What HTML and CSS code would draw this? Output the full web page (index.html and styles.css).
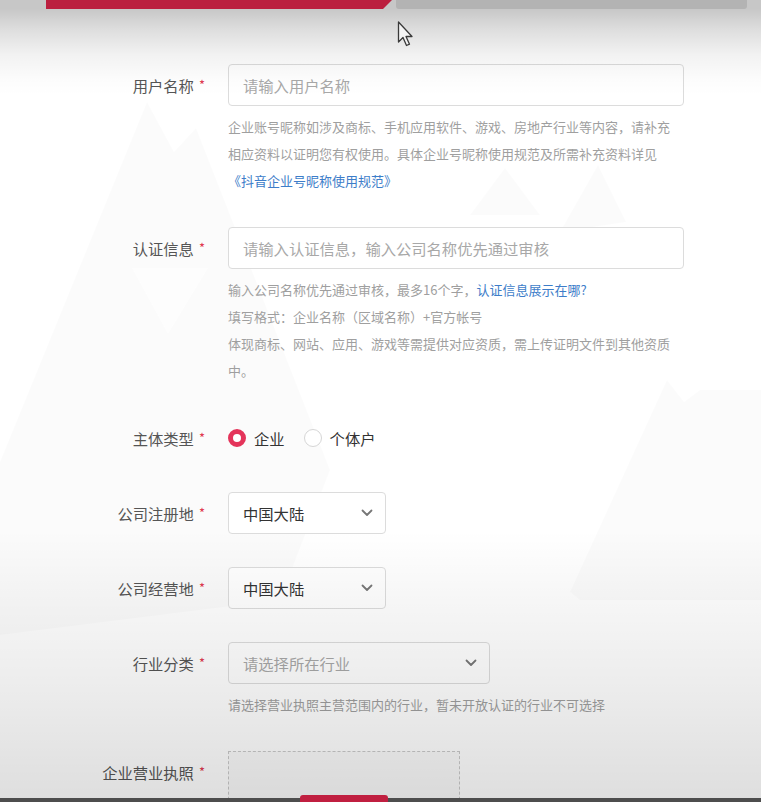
FILE: index.html
```html
<!DOCTYPE html>
<html lang="zh-CN">
<head>
<meta charset="utf-8">
<title>企业认证</title>
<link rel="stylesheet" href="styles.css">
</head>
<body>
<svg class="mountains" width="761" height="802" viewBox="0 0 761 802" aria-hidden="true">
  <polygon points="-40,560 147,102 174,152 196,128 330,470 280,600 -40,640" />
  <polygon points="570,592 667,380 684,402 700,390 761,390 761,600 580,600" />
  <polygon points="560,232 598,165 626,222" />
  <polygon points="470,215 505,168 540,215" />
  <polygon class="snow" points="132,268 168,334 208,268" />
</svg>

<div class="topbar">
  <div class="topbar-red"></div>
  <div class="topbar-grey"></div>
</div>

<main class="form">
  <div class="row">
    <div class="label">用户名称<span class="req">*</span></div>
    <div class="control">
      <div class="input wide"><span class="ph">请输入用户名称</span></div>
      <p class="help">企业账号昵称如涉及商标、手机应用软件、游戏、房地产行业等内容，请补充相应资料以证明您有权使用。具体企业号昵称使用规范及所需补充资料详见<a class="link">《抖音企业号昵称使用规范》</a></p>
    </div>
  </div>

  <div class="row">
    <div class="label">认证信息<span class="req">*</span></div>
    <div class="control">
      <div class="input wide"><span class="ph">请输入认证信息，输入公司名称优先通过审核</span></div>
      <p class="help">输入公司名称优先通过审核，最多16个字，<a class="link">认证信息展示在哪?</a><br>填写格式：企业名称（区域名称）+官方帐号<br>体现商标、网站、应用、游戏等需提供对应资质，需上传证明文件到其他资质中。</p>
    </div>
  </div>

  <div class="row">
    <div class="label">主体类型<span class="req">*</span></div>
    <div class="control radios">
      <span class="radio on"></span><span class="radio-text">企业</span>
      <span class="radio"></span><span class="radio-text">个体户</span>
    </div>
  </div>

  <div class="row">
    <div class="label">公司注册地<span class="req">*</span></div>
    <div class="control">
      <div class="input select small"><span class="val">中国大陆</span><svg class="chev" width="12" height="8" viewBox="0 0 12 8"><path d="M1.5 1.5 L6 6 L10.5 1.5" /></svg></div>
    </div>
  </div>

  <div class="row">
    <div class="label">公司经营地<span class="req">*</span></div>
    <div class="control">
      <div class="input select small"><span class="val">中国大陆</span><svg class="chev" width="12" height="8" viewBox="0 0 12 8"><path d="M1.5 1.5 L6 6 L10.5 1.5" /></svg></div>
    </div>
  </div>

  <div class="row">
    <div class="label">行业分类<span class="req">*</span></div>
    <div class="control">
      <div class="input select medium"><span class="ph">请选择所在行业</span><svg class="chev" width="12" height="8" viewBox="0 0 12 8"><path d="M1.5 1.5 L6 6 L10.5 1.5" /></svg></div>
      <p class="help">请选择营业执照主营范围内的行业，暂未开放认证的行业不可选择</p>
    </div>
  </div>

  <div class="row">
    <div class="label">企业营业执照<span class="req">*</span></div>
    <div class="control">
      <div class="upload"></div>
    </div>
  </div>
</main>

<div class="shade"></div>

<svg class="cursor" width="18" height="28" viewBox="0 0 18 28" aria-hidden="true">
  <path d="M1.5 1 L1.5 21 L6 16.5 L9.5 24.5 L12.5 23.2 L9 15.5 L15 15.5 Z" />
</svg>

<div class="bottombar"><div class="bottom-red"></div></div>
</body>
</html>
```

FILE: styles.css
```css
* { box-sizing: border-box; }

html, body {
  margin: 0;
  padding: 0;
}

body {
  position: relative;
  width: 761px;
  min-height: 802px;
  overflow: hidden;
  background: #ffffff;
  font-family: "Noto Sans CJK SC", "Noto Sans", "Liberation Sans", sans-serif;
  color: #555;
}

.mountains {
  position: absolute;
  left: 0;
  top: 0;
  z-index: 0;
}
.mountains polygon { fill: rgba(0, 0, 0, 0.016); }
.mountains .snow { fill: rgba(255, 255, 255, 0.6); }

.topbar {
  position: relative;
  z-index: 3;
  display: flex;
  height: 9px;
  padding-left: 46px;
  gap: 4px;
}
.topbar-red {
  width: 346px;
  height: 9px;
  background: #bb1f3f;
  clip-path: polygon(0 0, 100% 0, calc(100% - 9px) 100%, 0 100%);
}
.topbar-grey {
  width: 351px;
  height: 9px;
  background: #b3b3b3;
  border-radius: 0 0 3px 3px;
}

.form {
  position: relative;
  z-index: 1;
  padding-top: 55px;
}

.row {
  display: grid;
  grid-template-columns: 205px 1fr;
  column-gap: 23px;
  margin-bottom: 33px;
}

.label {
  height: 42px;
  text-align: right;
  font-size: 15.3px;
  line-height: 42px;
  color: #555;
  white-space: nowrap;
}
.req {
  color: #e0384f;
  font-size: 13px;
  line-height: 1;
  margin-left: 5px;
  position: relative;
  top: -2px;
}

.control { min-width: 0; }

.input {
  display: flex;
  align-items: center;
  height: 42px;
  padding: 0 14px;
  background: #ffffff;
  border: 1px solid #dcdcdc;
  border-radius: 4px;
  font-size: 15.3px;
}
.wide { width: 456px; }
.small { width: 158px; }
.medium { width: 262px; }

.ph { color: #a8a8a8; }
.val { color: #333; }

.select { justify-content: space-between; padding-right: 12px; }
.chev path {
  fill: none;
  stroke: #777;
  stroke-width: 1.8;
  stroke-linecap: round;
  stroke-linejoin: round;
}

.help {
  margin: 7px 0 0;
  width: 450px;
  font-size: 13px;
  line-height: 27px;
  color: #9f9f9f;
}
.link { color: #3d7dc9; text-decoration: none; }

.radios {
  display: flex;
  align-items: center;
  height: 42px;
}
.radio {
  width: 18px;
  height: 18px;
  border-radius: 50%;
  border: 1px solid #d6d6d6;
  background: #fff;
  margin-right: 8px;
}
.radio.on {
  border: 5.5px solid #e4345a;
  background: #fff;
}
.radio-text {
  font-size: 15.3px;
  color: #333;
  margin-right: 19px;
}

.upload {
  width: 232px;
  height: 120px;
  border: 1px dashed #c9c9c9;
  background: #fafafa;
}

.shade {
  position: absolute;
  left: 0;
  top: 0;
  width: 761px;
  height: 802px;
  z-index: 2;
  pointer-events: none;
  background:
    linear-gradient(to bottom, rgba(0,0,0,0.22) 9px, rgba(0,0,0,0.13) 30px, rgba(0,0,0,0.05) 55px, rgba(0,0,0,0.01) 80px, rgba(0,0,0,0) 95px),
    linear-gradient(to bottom, rgba(0,0,0,0) 530px, rgba(0,0,0,0.035) 600px, rgba(0,0,0,0.07) 680px, rgba(0,0,0,0.11) 760px, rgba(0,0,0,0.13) 800px);
}

.cursor {
  position: absolute;
  left: 397px;
  top: 21px;
  z-index: 4;
}
.cursor path {
  fill: #f4f4f4;
  stroke: #3a3a3a;
  stroke-width: 1.3;
  stroke-linejoin: round;
}

.bottombar {
  position: fixed;
  left: 0;
  bottom: 0;
  width: 761px;
  height: 4px;
  z-index: 4;
  background: #4d4d4d;
}
.bottom-red {
  position: absolute;
  left: 300px;
  bottom: 0;
  width: 88px;
  height: 7px;
  background: #c01f40;
  border-radius: 3px 3px 0 0;
}
```
